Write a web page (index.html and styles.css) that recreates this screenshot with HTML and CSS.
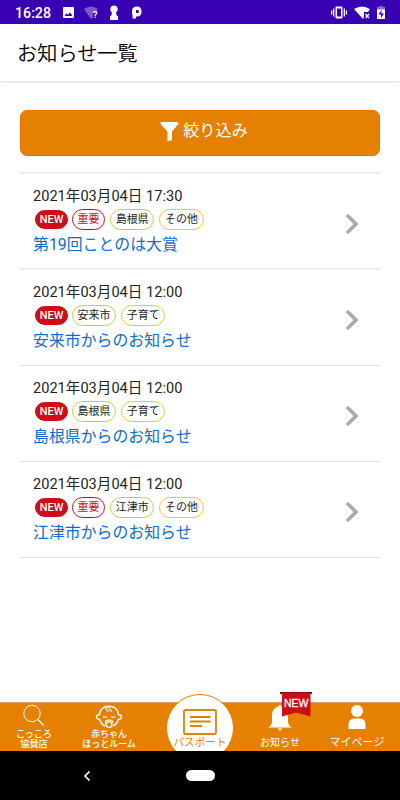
FILE: index.html
```html
<!DOCTYPE html>
<html lang="ja">
<head>
    <meta charset="UTF-8">
    <meta name="viewport" content="width=device-width, initial-scale=1.0">
    <title>お知らせ一覧</title>
    <link rel="stylesheet" href="styles.css">
</head>
<body>
    <div class="status-bar">
        <span class="clock">16:28</span>
        <svg class="status-left" width="82" height="16" viewBox="0 0 82 16" fill="#fff">
            <path fill-rule="evenodd" d="M2 2h9q1 0 1 1v9q0 1-1 1H2q-1 0-1-1V3q0-1 1-1zM2.500 11h8L8 7.200 6 9.700 4.600 8.200z"/>
            <path opacity=".35" d="M22 4q7-5 14 0l-2 3-3 1v4l-2 2z"/>
            <text class="wifi-mark" x="31" y="13">?</text>
            <path d="M52 .5a3.700 3.700 0 0 1 2.500 6.500L54 8l1 3h1v4h-8v-4h1l1-3-.5-1A3.700 3.700 0 0 1 52 .5z"/>
            <path fill-rule="evenodd" d="M70 6q0-4.500 5-4.500 4.500 0 4.500 5T75 11.500h-1v2h-3.500v-4H70zM74 5v3h1.500a1.500 1.500 0 0 0 0-3z"/>
        </svg>
        <svg class="status-right" width="56" height="16" viewBox="0 0 56 16" fill="#fff">
            <path fill-rule="evenodd" d="M6.500 1.500h5q1 0 1 1v10q0 1-1 1h-5q-1 0-1-1v-10q0-1 1-1zM7 3.500v8h4v-8z"/>
            <path d="M3 3.500h1.300v8H3zM1 5.500h1.300v4H1zM13.700 3.500H15v8h-1.300zM15.800 5.500h1.300v4h-1.300z"/>
            <path d="M24 4q8-5 16 0l-2 3h-4v5l-1 2z"/>
            <path d="M35.500 9l3.500 4M39 9l-3.500 4" stroke="#fff" stroke-width="1.300"/>
            <path opacity=".4" d="M47 2h2V1h4v1h2v3h-8V2z"/>
            <path fill-rule="evenodd" d="M47 4.500h8V14h-8zM51.500 5L48.500 9.500H51V13l3-4.500h-2.500z"/>
        </svg>
    </div>

    <header>
        <h1>お知らせ一覧</h1>
    </header>

    <main>
        <button class="filter-btn">
            <svg width="19" height="20" viewBox="0 0 19 20" fill="#fff"><path d="M1 0h17q1 1 0 2.500l-6 7V17q-.5 2-4.500 2.200V9.500l-6.500-7Q0 1 1 0z"/></svg>
            <span>絞り込み</span>
        </button>

        <ul class="news-list">
            <li class="news-item">
                <div class="news-body">
                    <p class="date">2021年03月04日 17:30</p>
                    <div class="tags">
                        <span class="tag new">NEW</span>
                        <span class="tag important">重要</span>
                        <span class="tag area">島根県</span>
                        <span class="tag category">その他</span>
                    </div>
                    <a class="title">第19回ことのは大賞</a>
                </div>
                <svg class="arrow" width="14" height="22" viewBox="0 0 14 22"><path d="M2 2l9 9-9 9"/></svg>
            </li>
            <li class="news-item">
                <div class="news-body">
                    <p class="date">2021年03月04日 12:00</p>
                    <div class="tags">
                        <span class="tag new">NEW</span>
                        <span class="tag area">安来市</span>
                        <span class="tag category">子育て</span>
                    </div>
                    <a class="title">安来市からのお知らせ</a>
                </div>
                <svg class="arrow" width="14" height="22" viewBox="0 0 14 22"><path d="M2 2l9 9-9 9"/></svg>
            </li>
            <li class="news-item">
                <div class="news-body">
                    <p class="date">2021年03月04日 12:00</p>
                    <div class="tags">
                        <span class="tag new">NEW</span>
                        <span class="tag area">島根県</span>
                        <span class="tag category">子育て</span>
                    </div>
                    <a class="title">島根県からのお知らせ</a>
                </div>
                <svg class="arrow" width="14" height="22" viewBox="0 0 14 22"><path d="M2 2l9 9-9 9"/></svg>
            </li>
            <li class="news-item">
                <div class="news-body">
                    <p class="date">2021年03月04日 12:00</p>
                    <div class="tags">
                        <span class="tag new">NEW</span>
                        <span class="tag important">重要</span>
                        <span class="tag area">江津市</span>
                        <span class="tag category">その他</span>
                    </div>
                    <a class="title">江津市からのお知らせ</a>
                </div>
                <svg class="arrow" width="14" height="22" viewBox="0 0 14 22"><path d="M2 2l9 9-9 9"/></svg>
            </li>
        </ul>
    </main>

    <nav class="tab-bar">
        <a class="tab shop">
            <svg width="24" height="24" viewBox="0 0 24 24" fill="none" stroke="#fff"><circle cx="10" cy="9.500" r="8.200"/><path d="M15.800 15.500l6 6" stroke-width="1.200"/></svg>
            <span>こっころ<br>協賛店</span>
        </a>
        <a class="tab baby">
            <svg width="28" height="25" viewBox="0 0 28 25" fill="none" stroke="#fff" stroke-width="1.400">
                <path d="M10 22q-4-1.800-5.300-6.500Q1.500 15 1.500 12.700q.2-2 2.800-1.900Q5.500 2.200 14 2.200t9.700 8.600q2.600-.1 2.800 1.900 0 2.300-3.200 2.800Q22 20.200 18 22"/>
                <path d="M10.500 3q.5 3.500 3.500 4.500M13.500 2.300q0 3 3.500 5.200" stroke-width="1.100"/>
                <path d="M8 12.500q1.800 1.800 3.800 0M16.200 12.500q2 1.800 3.800 0" stroke-width="1.200"/>
                <path d="M10.500 19q-.8-3 3.500-3t3.500 3" stroke-width="1.200"/>
                <circle cx="14" cy="20.500" r="2.900"/>
            </svg>
            <span>赤ちゃん<br>ほっとルーム</span>
        </a>
        <a class="tab passport">
            <span class="circle">
                <svg width="34" height="26" viewBox="0 0 34 26" fill="none" stroke="#e68000" stroke-width="1.800"><rect x="1" y="1" width="32" height="24" rx="1.500"/><path d="M7 8h20.500M7 12.500h20.500M7 17h12"/></svg>
                <span>パスポート</span>
            </span>
        </a>
        <a class="tab notice">
            <svg width="24" height="26" viewBox="0 0 24 26" fill="#fff"><path d="M10.500 1.500a1.500 1.500 0 0 1 3 0q6 1.500 6.500 8v7q.5 4.500 4 6H0q3.500-1.500 4-6v-7q.5-6.500 6.500-8zM10 23.500h4q-.5 2-2 2t-2-2z"/></svg>
            <span>お知らせ</span>
            <span class="ribbon">
                <svg width="32" height="25" viewBox="0 0 32 25"><path fill="#8c0b10" d="M0 0h32v2H0z"/><path fill="#cd0d17" d="M2 1h28.500v23.500L16 20.500 2 24.500z"/></svg>
                <span>NEW</span>
            </span>
        </a>
        <a class="tab mypage">
            <svg width="18" height="24" viewBox="0 0 18 24" fill="#fff"><circle cx="9" cy="6" r="6"/><path d="M.5 24v-4.500q0-6 6-6h5q6 0 6 6V24z"/></svg>
            <span>マイページ</span>
        </a>
    </nav>

    <div class="system-bar">
        <svg width="8" height="12" viewBox="0 0 8 12" fill="none" stroke="#fff" stroke-width="1.700"><path d="M6.500 1.500L2 6l4.500 4.500"/></svg>
        <span class="home"></span>
        <span class="spacer"></span>
    </div>
</body>
</html>
```
FILE: styles.css
```css
:root {
    --orange: #e68000;
    --purple: #3700b3;
    --red: #cd0d17;
    --blue: #0f6bd3;
}

* {
    margin: 0;
    padding: 0;
    box-sizing: border-box;
}

body {
    width: 400px;
    height: 800px;
    overflow: hidden;
    display: flex;
    flex-direction: column;
    background: #fff;
    color: #222;
    font-family: Roboto, "Noto Sans CJK JP", sans-serif;
}

svg {
    display: block;
    flex: none;
}

.status-bar {
    height: 24px;
    flex: none;
    display: flex;
    align-items: center;
    padding: 1px 14px 0 15px;
    background: var(--purple);
    color: #fff;
}

.clock {
    width: 47px;
    font-size: 14.200px;
    font-weight: 500;
}

.status-right {
    margin-left: auto;
}

.wifi-mark {
    font-size: 9px;
    font-weight: 700;
}

header {
    height: 57px;
    flex: none;
    padding-left: 17px;
    box-shadow: 0 1px 2px rgba(0, 0, 0, 0.15);
}

h1 {
    font-size: 20.200px;
    font-weight: 350;
    line-height: 61px;
    color: #000;
}

main {
    flex: 1;
    padding: 29px 20px 0;
}

.filter-btn {
    width: 100%;
    height: 46px;
    display: flex;
    justify-content: center;
    gap: 4px;
    padding: 11px 0 0 8px;
    border: 1px solid #e67200;
    border-radius: 7px;
    background: var(--orange);
    color: #fff;
    font-family: inherit;
    font-size: 16.200px;
    font-weight: 400;
    line-height: 17px;
}

.news-list {
    margin-top: 16px;
    list-style: none;
    border-top: 1px solid #e2e2e2;
}

.news-item {
    height: 96.250px;
    display: flex;
    align-items: center;
    justify-content: space-between;
    padding: 0 21px 0 13px;
    border-bottom: 1px solid #e2e2e2;
}

.news-body {
    height: 70px;
}

.date {
    font-size: 14.600px;
    line-height: 20px;
    font-weight: 400;
}

.tags {
    display: flex;
    align-items: center;
    gap: 5px;
    height: 21px;
    margin: 3px 0 4px 2px;
}

.tag {
    height: 21px;
    padding: 0 4.600px;
    border: 1px solid;
    border-radius: 11px;
    font-size: 11px;
    font-weight: 400;
    line-height: 20px;
}

.tag.new {
    width: 33px;
    height: 19px;
    padding: 0;
    margin-right: -1px;
    border-color: var(--red);
    background: var(--red);
    color: #fff;
    font-weight: 500;
    line-height: 17px;
    text-align: center;
}

.tag.important {
    border-color: var(--red);
    color: var(--red);
}

.tag.area {
    border-color: #b5d73c;
}

.tag.category {
    border-color: #f3c632;
}

.title {
    display: block;
    font-size: 15.900px;
    font-weight: 400;
    line-height: 21px;
    color: var(--blue);
}

.arrow {
    margin-top: 6px;
    fill: none;
    stroke: #aaa;
    stroke-width: 3.600;
}

.tab-bar {
    height: 49px;
    flex: none;
    display: flex;
    background: var(--orange);
    border-top: 1px solid #e39a63;
    color: #fff;
    font-size: 10px;
    text-align: center;
}

.tab {
    position: relative;
    flex: none;
    display: flex;
    flex-direction: column;
    align-items: center;
    white-space: nowrap;
}

.shop {
    width: 68px;
    padding-top: 1px;
    font-size: 9.200px;
    font-weight: 500;
    line-height: 9.500px;
}

.shop svg {
    margin-bottom: 1px;
}

.baby {
    width: 82px;
    padding-top: 1px;
    font-size: 9px;
    font-weight: 500;
    line-height: 9.500px;
}

.baby svg {
    margin-bottom: 1px;
}

.passport {
    width: 100px;
}

/* round tab rises above the bar, its foot is hidden by the system bar */
.circle {
    position: absolute;
    top: -9px;
    width: 68px;
    height: 68px;
    display: flex;
    flex-direction: column;
    align-items: center;
    padding-top: 14px;
    border: 1px solid var(--orange);
    border-radius: 50%;
    background: #fff;
    color: var(--orange);
    font-size: 10.600px;
    line-height: 16px;
}

.notice {
    width: 60px;
    padding-top: 2px;
    line-height: 24px;
}

.ribbon {
    position: absolute;
    top: -11px;
    left: 30px;
}

.ribbon > span {
    position: absolute;
    top: 3px;
    left: 4px;
    font-family: "Liberation Sans", sans-serif;
    font-size: 10.500px;
    line-height: 16px;
    -webkit-text-stroke: 0.300px #fff;
}

.mypage {
    width: 86px;
    margin-left: 4px;
    padding-top: 2px;
    font-size: 11px;
    line-height: 27px;
}

.system-bar {
    position: relative;
    z-index: 1;
    height: 49px;
    flex: none;
    display: flex;
    align-items: center;
    justify-content: space-between;
    padding: 0 83px;
    background: #000;
}

.home {
    width: 29px;
    height: 11px;
    border-radius: 6px;
    background: #fff;
}

.spacer {
    width: 8px;
}
```
